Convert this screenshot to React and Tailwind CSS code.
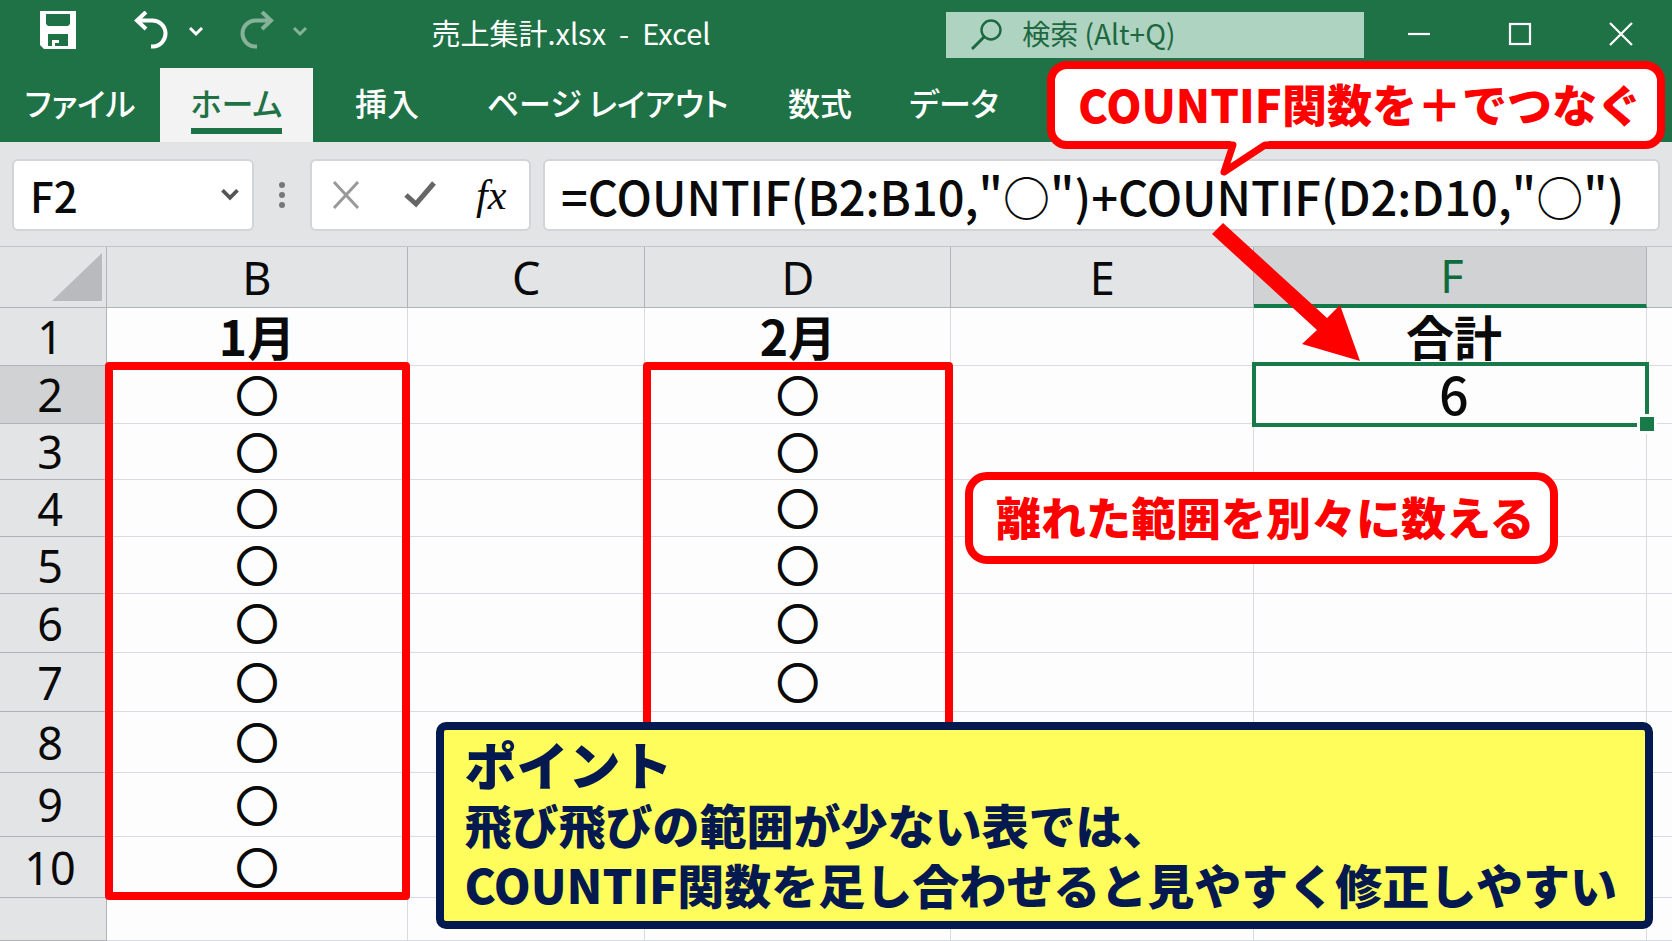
import React, { useState } from 'react'

const TABS = [
  { label: 'ファイル', width: 'w-[160px]' },
  { label: 'ホーム', width: 'w-[153px]' },
  { label: '挿入', width: 'w-[148px]' },
  { label: 'ページ レイアウト', width: 'w-[293px]' },
  { label: '数式', width: 'w-[132px]' },
  { label: 'データ', width: 'w-[136px]' }
]

const COLUMNS = ['B', 'C', 'D', 'E', 'F']

const ROWS = [
  { n: 1, height: 'h-[58px]', B: '1月', D: '2月', F: '合計' },
  { n: 2, height: 'h-[58px]', B: '○', D: '○', F: '6' },
  { n: 3, height: 'h-[56px]', B: '○', D: '○' },
  { n: 4, height: 'h-[57px]', B: '○', D: '○' },
  { n: 5, height: 'h-[57px]', B: '○', D: '○' },
  { n: 6, height: 'h-[59px]', B: '○', D: '○' },
  { n: 7, height: 'h-[59px]', B: '○', D: '○' },
  { n: 8, height: 'h-[61px]', B: '○' },
  { n: 9, height: 'h-[64px]', B: '○' },
  { n: 10, height: 'h-[61px]', B: '○' },
  { n: '', height: 'h-[43px]' }
]

const FORMULA = '=COUNTIF(B2:B10,"○")+COUNTIF(D2:D10,"○")'

export default function App() {
  return (
    <main
      lang="ja"
      className="relative min-h-screen overflow-hidden bg-[#fdfdfd] font-['Noto_Sans_CJK_JP',sans-serif] text-[#0a0a0a]"
    >
      <header className="bg-[#1f7246] text-white">
        <TitleBar />
        <RibbonTabs />
      </header>
      <FormulaBar />
      <Sheet />

      <FormulaCallout />
      <Arrow />
      <div className="absolute left-[57.7%] top-[472px] z-20 flex h-[92px] w-[593px] items-center justify-center whitespace-nowrap rounded-[22px] border-8 border-[#fe0000] bg-white pb-1 pl-2 text-[45px] font-black leading-none text-[#fe0000]">
        離れた範囲を別々に数える
      </div>
      <PointNote />
    </main>
  )
}

function TitleBar() {
  return (
    <div className="grid h-[68px] grid-cols-[25.8%_30.8%_25%_1fr]">
      <div className="flex items-center pb-2 pl-10">
        <button type="button" aria-label="上書き保存">
          <SaveIcon />
        </button>
        <button type="button" aria-label="元に戻す" className="ml-[58px]">
          <UndoIcon />
        </button>
        <button type="button" aria-label="元に戻す履歴" className="ml-5 mt-1">
          <Chevron className="w-4" />
        </button>
        <button type="button" aria-label="やり直し" className="ml-9 text-[#86b299]">
          <UndoIcon className="-scale-x-100" />
        </button>
        <button type="button" aria-label="やり直し履歴" className="ml-[18px] mt-1 text-[#86b299]">
          <Chevron className="w-4" />
        </button>
      </div>
      <h1 className="flex items-center whitespace-pre pb-1 text-[29px] leading-none">
        {'売上集計.xlsx  -  Excel'}
      </h1>
      <label className="mt-3 flex h-[46px] items-center gap-5 bg-[#afd3c1] pl-6 text-[#1c6840]">
        <svg viewBox="0 0 32 32" className="size-8 shrink-0" fill="none" stroke="currentColor" strokeWidth="2.4">
          <circle cx="21" cy="11" r="9.5" />
          <path d="M14 18 2 30" strokeWidth="3" />
        </svg>
        <input
          type="search"
          aria-label="検索"
          placeholder="検索 (Alt+Q)"
          className="min-w-0 flex-1 bg-transparent pb-1 text-[28px] leading-none outline-none placeholder:text-[#1c6840]"
        />
      </label>
      <div className="flex items-center pl-1">
        <WindowButton label="最小化">
          <path d="M1 12h22" />
        </WindowButton>
        <WindowButton label="最大化">
          <rect x="2" y="2" width="20" height="20" />
        </WindowButton>
        <WindowButton label="閉じる">
          <path d="M1 1l22 22M23 1 1 23" />
        </WindowButton>
      </div>
    </div>
  )
}

function WindowButton({ label, children }) {
  return (
    <button type="button" aria-label={label} className="flex flex-1 justify-center">
      <svg viewBox="0 0 24 24" className="size-6" fill="none" stroke="currentColor" strokeWidth="2.2">
        {children}
      </svg>
    </button>
  )
}

function RibbonTabs() {
  const [active, setActive] = useState('ホーム')

  return (
    <nav className="flex h-[74px] text-[32px] font-medium leading-none [font-feature-settings:'palt']">
      {TABS.map(({ label, width }) => {
        const on = label === active
        return (
          <button
            key={label}
            type="button"
            onClick={() => setActive(label)}
            className={`flex items-start justify-center whitespace-nowrap pt-[18px] ${width} ${
              on ? 'bg-[#f3f3f3] text-[#1f7246]' : ''
            }`}
          >
            <span className={on ? 'border-b-[6px] border-[#1f7246] pb-2.5' : ''}>{label}</span>
          </button>
        )
      })}
    </nav>
  )
}

function FormulaBar() {
  const [formula, setFormula] = useState(FORMULA)
  const box = 'h-[72px] rounded-md border-2 border-[#d3d4d7] bg-white'

  return (
    <div className="flex h-[105px] items-center border-b border-[#c3c4c7] bg-[#e3e4e6] px-3 pt-0.5">
      <div className={`grid w-[242px] shrink-0 items-center ${box}`}>
        <select
          aria-label="名前ボックス"
          defaultValue="F2"
          className="col-start-1 row-start-1 h-full appearance-none bg-transparent pl-4 text-[42px] font-medium leading-none outline-none"
        >
          <option>F2</option>
        </select>
        <Chevron className="pointer-events-none col-start-1 row-start-1 mr-3 w-5 justify-self-end text-[#555]" />
      </div>
      <div className="flex w-14 shrink-0 flex-col items-center gap-1 text-[#777]">
        <span className="size-1.5 rounded-full bg-current" />
        <span className="size-1.5 rounded-full bg-current" />
        <span className="size-1.5 rounded-full bg-current" />
      </div>
      <div className={`flex w-[221px] shrink-0 items-center ${box}`}>
        <button type="button" aria-label="キャンセル" className="ml-5 text-[#999]">
          <svg viewBox="0 0 28 28" className="size-7" fill="none" stroke="currentColor" strokeWidth="3">
            <path d="M2 1l24 26M26 1 2 27" />
          </svg>
        </button>
        <button type="button" aria-label="入力" className="ml-11 text-[#666]">
          <svg viewBox="0 0 32 28" className="h-7 w-8" fill="none" stroke="currentColor" strokeWidth="5">
            <path d="M2 14l10 9L30 2" />
          </svg>
        </button>
        <button
          type="button"
          aria-label="関数の挿入"
          className="ml-10 font-['Liberation_Serif',serif] text-[42px] italic leading-none"
        >
          fx
        </button>
      </div>
      <input
        aria-label="数式バー"
        value={formula}
        onChange={(e) => setFormula(e.target.value)}
        className={`ml-3 min-w-0 flex-1 pl-4 text-[47px] font-medium leading-none outline-none ${box}`}
      />
    </div>
  )
}

function Sheet() {
  return (
    <table className="w-full table-fixed border-separate border-spacing-0 text-center leading-none">
      <colgroup>
        <col className="w-[6.4%]" />
        <col className="w-[18%]" />
        <col className="w-[14.2%]" />
        <col className="w-[18.3%]" />
        <col className="w-[18.1%]" />
        <col className="w-[23.5%]" />
        <col />
      </colgroup>
      <thead className="bg-[#e3e4e6] font-['Noto_Sans',sans-serif] text-[45px]">
        <tr className="h-[61px]">
          <td className="border-b border-r border-[#b2b3b6] p-0">
            <svg viewBox="0 0 50 48" className="ml-auto mr-1 h-12 w-[50px]">
              <path d="M50 0v48H0z" fill="#b9babd" />
            </svg>
          </td>
          {COLUMNS.map((c) => (
            <th
              key={c}
              scope="col"
              className={`border-r py-0 pr-0 font-normal ${
                c === 'F'
                  ? 'border-b-4 border-b-[#127a49] border-r-[#b2b3b6] bg-[#d1d2d4] pl-1 text-[#0f6b3c]'
                  : 'border-b border-[#b2b3b6] pl-0'
              }`}
            >
              {c}
            </th>
          ))}
          <td className="border-b border-[#b2b3b6] p-0" />
        </tr>
      </thead>
      <tbody>
        {ROWS.map((row) => (
          <tr key={row.n} className={row.height}>
            <th
              scope="row"
              className={`border-b border-r border-[#b2b3b6] py-0 pl-0 pr-1.5 font-['Noto_Sans',sans-serif] text-[45px] font-normal ${
                row.n === 2 ? 'bg-[#d1d2d4]' : 'bg-[#e3e4e6]'
              }`}
            >
              {row.n}
            </th>
            {COLUMNS.map((c) => (
              <Cell key={c} row={row.n} column={c} value={row[c]} />
            ))}
            <td className="border-b border-[#d8dbdf] p-0" />
          </tr>
        ))}
      </tbody>
    </table>
  )
}

function Cell({ row, column, value }) {
  const ranged = row === 2 && (column === 'B' || column === 'D')
  const selected = row === 2 && column === 'F'

  // the ○ glyph is thin even in bold, so the marks get an outline
  let text = 'pb-0.5 text-[42px] font-bold [-webkit-text-stroke:2px_#0a0a0a]'
  if (row === 1) text = 'pb-1 text-[48px] font-bold'
  if (selected) text = 'pb-1 text-[52px] font-medium'

  return (
    <td
      className={`border-b border-r border-[#d8dbdf] pr-0 pt-0 ${text} ${
        column === 'F' ? 'pl-2' : 'pl-0'
      } ${ranged || selected ? 'relative z-10' : ''}`}
    >
      {value}
      {ranged && (
        <span className="absolute -left-0.5 -right-[3px] -top-1 h-[538px] rounded-sm border-8 border-[#fe0000]" />
      )}
      {selected && (
        <>
          <span className="absolute -left-0.5 -right-[3px] -top-1 -bottom-1 border-4 border-[#177a48]" />
          <span className="absolute -bottom-[11px] -right-[11px] size-5 border-[3px] border-[#fdfdfd] bg-[#177a48]" />
        </>
      )}
    </td>
  )
}

function FormulaCallout() {
  return (
    <div className="absolute right-[7px] top-[61px] z-20 w-[618px]">
      <div className="flex h-[88px] items-center justify-center whitespace-nowrap rounded-[20px] border-8 border-[#fe0000] bg-white pb-1 pl-2 text-[45px] font-black leading-none text-[#fe0000]">
        COUNTIF関数を＋でつなぐ
      </div>
      <svg viewBox="0 0 56 38" className="absolute left-[168px] top-[78px] h-[38px] w-14">
        <path d="M14 0 18 6 9 33 52 4 56 0z" fill="#fff" />
        <path d="M12 6h6L9 33 50 6h6" fill="none" stroke="#fe0000" strokeWidth="7" strokeLinejoin="round" />
      </svg>
    </div>
  )
}

function Arrow() {
  return (
    <svg viewBox="0 0 148 138" className="absolute left-[72.5%] top-[223px] z-20 h-[138px] w-[148px]">
      <path d="M0 11 11 0 115 95 128 82 148 138 90 121 105 107z" fill="#fe0000" />
    </svg>
  )
}

function PointNote() {
  return (
    <section className="absolute left-[26.1%] right-[19px] top-[722px] z-20 h-[207px] whitespace-nowrap rounded-[10px] border-8 border-[#04194f] bg-[#fffd5c] pl-5 font-black text-[#04194f]">
      <h2 className="pt-1 text-[52px] leading-[60px]">ポイント</h2>
      <p className="text-[47px] leading-[60px]">
        飛び飛びの範囲が少ない表では、
        <br />
        COUNTIF関数を足し合わせると見やすく修正しやすい
      </p>
    </section>
  )
}

function Chevron({ className = '' }) {
  return (
    <svg viewBox="0 0 16 10" className={className} fill="none" stroke="currentColor" strokeWidth="3">
      <path d="M2 1l6 6 6-6" />
    </svg>
  )
}

function SaveIcon() {
  return (
    <svg viewBox="0 0 36 38" className="h-[38px] w-9">
      <path
        d="M0 0h36v38H4l-4-4zM6 3v10l2 2h20l2-2V3zM8 23v12h4v-6h7v6h9V23z"
        fill="currentColor"
        fillRule="evenodd"
      />
      <path d="M15 32h4v3h-4z" fill="#1f7246" />
    </svg>
  )
}

function UndoIcon({ className = '' }) {
  return (
    <svg viewBox="0 0 34 38" className={`h-[38px] w-[34px] ${className}`} fill="none" stroke="currentColor" strokeWidth="4">
      <path d="M12 1 3 9.500l9 8.500M3 9.500h15a13 13 0 0 1 1 26v2" />
    </svg>
  )
}
